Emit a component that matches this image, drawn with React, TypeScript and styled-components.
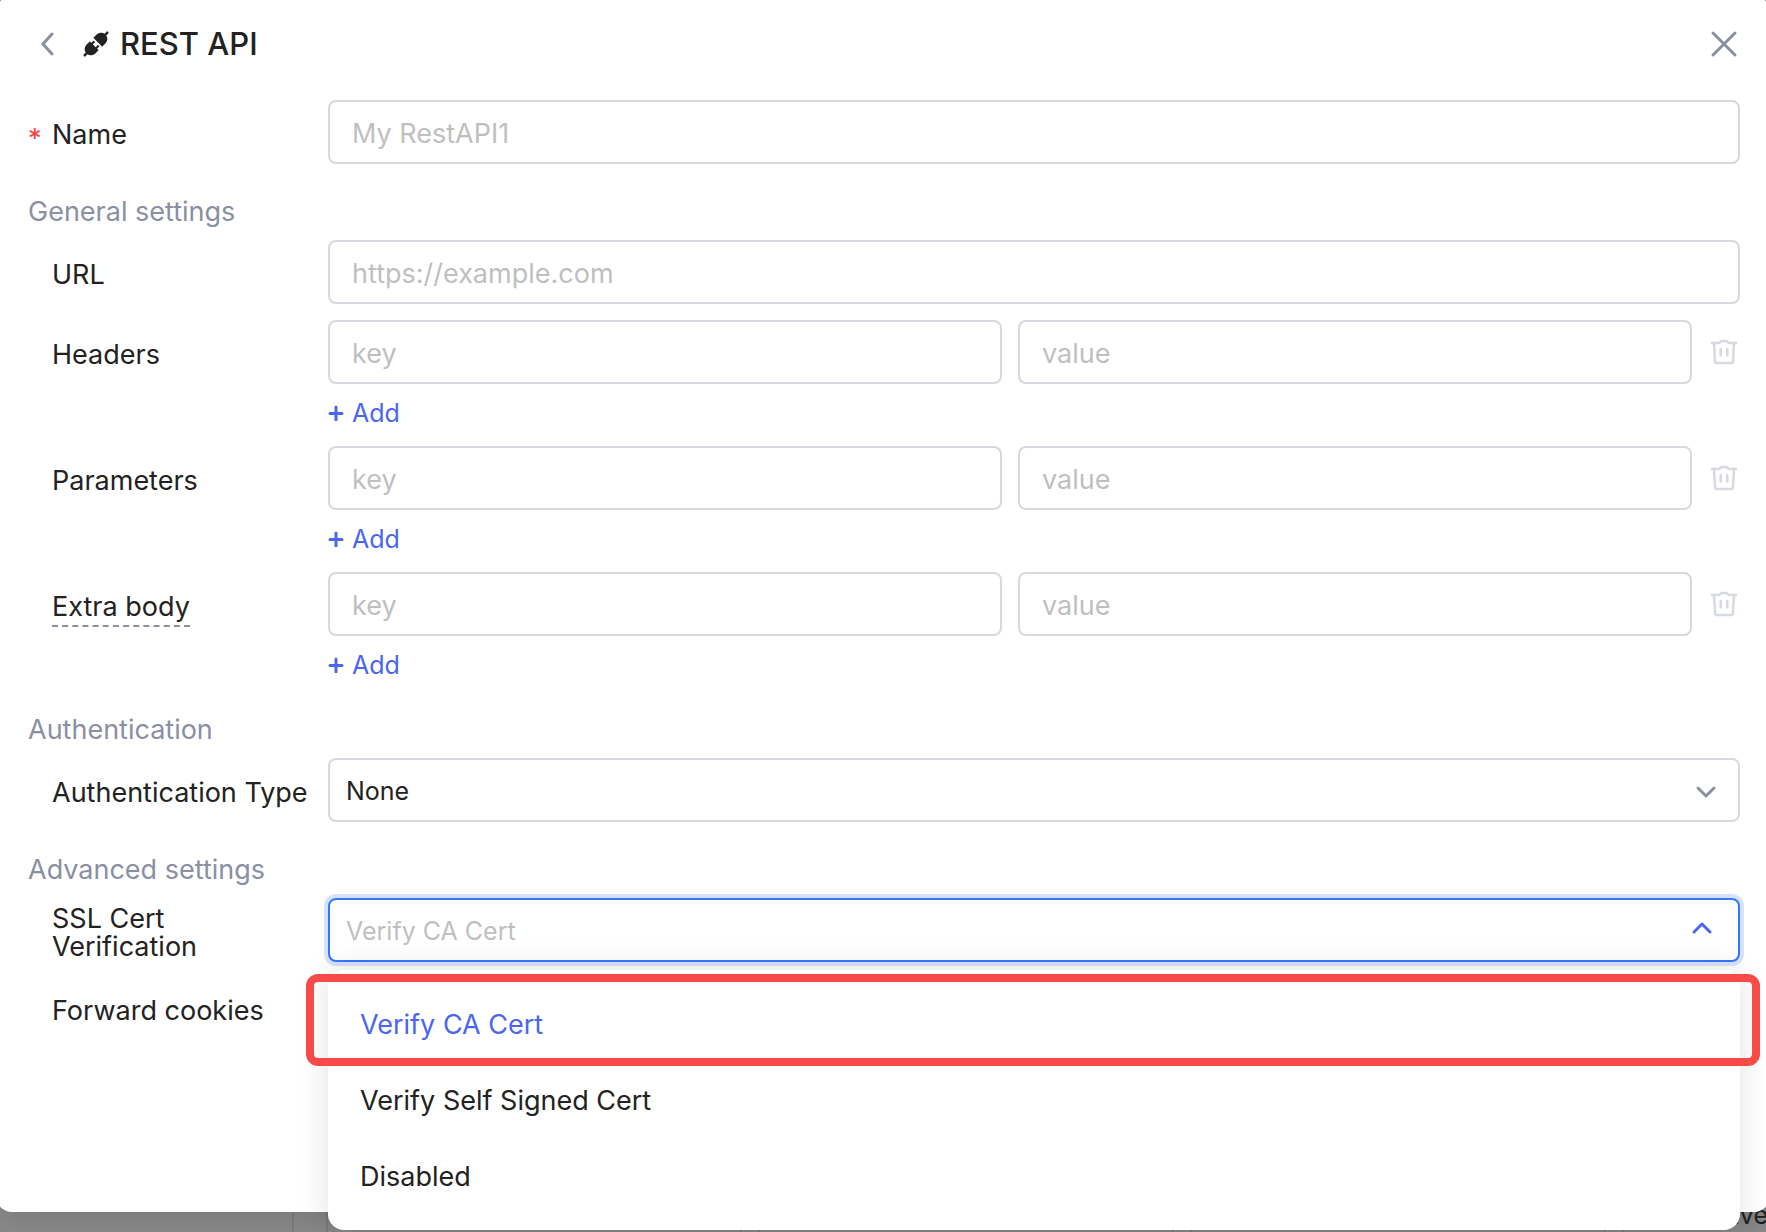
import React, { useState } from "react";
import { AiFillApi } from "react-icons/ai";
import styled, { createGlobalStyle, css } from "styled-components";

const colors = {
  text: "#222222",
  muted: "#8b8fa3",
  border: "#d7d9e0",
  placeholder: "#bfbfbf",
  link: "#4965f2",
  focus: "#3377ff",
  focusRing: "#d6e2ff",
  danger: "#ff4040",
  highlight: "#f74b47",
  backdrop: "#8a8a8a",
};

const GlobalStyle = createGlobalStyle`
  *, *::before, *::after { box-sizing: border-box; }
  body {
    margin: 0;
    color: ${colors.text};
    background: ${colors.backdrop};
    font-family: Inter, "Liberation Sans", sans-serif;
    font-size: 27px;
    line-height: 32px;
  }
  button, input, select { font: inherit; color: inherit; }
`;

const Screen = styled.div`
  position: relative;
  display: flex;
  flex-direction: column;
  min-height: 100vh;
  overflow: hidden;
`;

const Dialog = styled.main`
  position: relative;
  flex: 1;
  margin: -4px -4px 0;
  padding: 4px 30px 0 32px;
  border-radius: 16px;
  background: #fff;
  box-shadow: 0 8px 32px rgba(0, 0, 0, 0.12);
`;

const Backdrop = styled.div`
  display: grid;
  grid-template-columns: 294px 34px 414px 18px 414px 18px 414px 18px 1fr;
  height: 34px;
  margin-top: -14px;
`;

const BackdropCell = styled.div`
  display: flex;
  justify-content: flex-end;
  align-items: center;
  border-right: 2px solid #7c7d82;
  font-size: 25px;
  line-height: 34px;
  white-space: nowrap;

  &:last-child {
    margin-right: -2px;
    border-right: 0;
  }
`;

const Header = styled.header`
  display: flex;
  align-items: center;
  height: 88px;
  margin-bottom: 12px;
  padding: 0 0 0 4px;
`;

const Title = styled.h1`
  display: flex;
  flex: 1;
  align-items: center;
  gap: 8px;
  margin: 0 0 0 16px;
  font-size: 31px;
  font-weight: 500;
  line-height: 40px;
`;

const IconButton = styled.button`
  display: flex;
  align-items: center;
  justify-content: center;
  width: 32px;
  height: 32px;
  padding: 0;
  border: 0;
  background: none;
  color: ${colors.muted};
  cursor: pointer;

  &:disabled {
    color: ${colors.border};
    cursor: default;
  }
`;

const Section = styled.section`
  display: flex;
  flex-direction: column;
  gap: 16px;
  margin-bottom: 28px;
`;

const SectionTitle = styled.h2`
  margin: 0 0 -4px;
  padding-top: 4px;
  color: ${colors.muted};
  font-size: 27px;
  font-weight: 400;
  line-height: 32px;
`;

const Row = styled.div`
  display: grid;
  grid-template-columns: 260px minmax(0, 1fr);
  column-gap: 16px;
  padding-left: 24px;
`;

const Label = styled.label<{ $compact?: boolean }>`
  display: flex;
  align-items: center;
  height: ${({ $compact }) => ($compact ? 60 : 64)}px;
  padding-top: 6px;
  line-height: 28px;
`;

const Required = styled.span`
  width: 24px;
  margin-left: -24px;
  padding-top: 8px;
  color: ${colors.danger};
`;

const Hint = styled.span`
  padding: 6px 0 4px;
  border-bottom: 2px dashed ${colors.muted};
`;

const field = css`
  width: 100%;
  height: 64px;
  border: 2px solid ${colors.border};
  border-radius: 8px;
  outline: 0;
  background: #fff;
`;

const Input = styled.input`
  ${field}
  padding: 2px 22px 0;

  &::placeholder {
    color: ${colors.placeholder};
    opacity: 1;
  }
`;

const SelectBox = styled.div`
  position: relative;
`;

const Select = styled.select<{ $open?: boolean }>`
  ${field}
  appearance: none;
  padding: 2px 64px 0 16px;
  font-size: 25px;
  ${({ $open }) =>
    $open &&
    css`
      border-color: ${colors.focus};
      box-shadow: 0 0 0 4px ${colors.focusRing};
      color: ${colors.placeholder};
    `}
`;

const SelectArrow = styled.svg<{ $open?: boolean }>`
  position: absolute;
  top: ${({ $open }) => ($open ? 20 : 22)}px;
  right: ${({ $open }) => ($open ? 26 : 22)}px;
  color: ${({ $open }) => ($open ? colors.link : colors.muted)};
  pointer-events: none;
`;

const Pairs = styled.div`
  display: grid;
  grid-template-columns: minmax(0, 1fr) minmax(0, 1fr) 32px;
  align-items: center;
  gap: 12px 16px;
`;

const AddButton = styled.button`
  display: flex;
  align-items: center;
  justify-self: start;
  gap: 8px;
  height: 34px;
  padding: 0;
  border: 0;
  background: none;
  color: ${colors.link};
  font-size: 25px;
  line-height: 34px;
  cursor: pointer;
`;

const Menu = styled.div`
  position: absolute;
  z-index: 1;
  top: 72px;
  left: 0;
  right: 0;
  padding: 16px 0;
  border-radius: 16px;
  background: #fff;
  box-shadow: 0 0 32px rgba(0, 0, 0, 0.12);
`;

const MenuItem = styled.button<{ $selected?: boolean }>`
  display: block;
  width: 100%;
  height: 76px;
  padding: 2px 32px 0;
  border: 0;
  background: none;
  color: ${({ $selected }) => ($selected ? colors.link : colors.text)};
  text-align: left;
  cursor: pointer;
`;

const Highlight = styled.div`
  position: absolute;
  top: 4px;
  left: -22px;
  right: -20px;
  height: 92px;
  border: 8px solid ${colors.highlight};
  border-radius: 12px;
  pointer-events: none;
`;

const BackIcon = () => (
  <svg width="24" height="24" viewBox="0 0 24 24" fill="none" stroke="currentColor" strokeWidth="3" strokeLinecap="round" strokeLinejoin="round">
    <path d="M16 2 7 12l9 10" />
  </svg>
);

const CloseIcon = () => (
  <svg width="28" height="28" viewBox="0 0 28 28" fill="none" stroke="currentColor" strokeWidth="3" strokeLinecap="round">
    <path d="m3 3 22 22M25 3 3 25" />
  </svg>
);

const TrashIcon = () => (
  <svg width="28" height="28" viewBox="0 0 28 28" fill="none" stroke="currentColor" strokeWidth="2.5" strokeLinecap="round" strokeLinejoin="round">
    <path d="M2 5h7c1 0 1-2 3-2h4c2 0 2 2 3 2h7" />
    <path d="m4 5 1 18.500q0 1.500 1.500 1.500h15q1.500 0 1.500-1.500l1-18.500M10.700 11v6.500M17.300 11v6.500" />
  </svg>
);

const PlusIcon = () => (
  <svg width="16" height="16" viewBox="0 0 16 16" fill="none" stroke="currentColor" strokeWidth="3" strokeLinecap="round">
    <path d="M8 2v13M2 8.500h12" />
  </svg>
);

const Arrow = ({ open }: { open?: boolean }) => (
  <SelectArrow $open={open} width="24" height="24" viewBox="0 0 24 24" fill="none" stroke="currentColor" strokeWidth="3" strokeLinecap="round" strokeLinejoin="round">
    <path d={open ? "m4 14 8-8 8 8" : "m4 8 8 8 8-8"} />
  </SelectArrow>
);

function PairRow({ id, label, hint }: { id: string; label: string; hint?: boolean }) {
  return (
    <Row>
      <Label htmlFor={`${id}-key`}>{hint ? <Hint>{label}</Hint> : label}</Label>
      <Pairs>
        <Input id={`${id}-key`} placeholder="key" />
        <Input aria-label={`${label} value`} placeholder="value" />
        <IconButton type="button" aria-label={`Delete ${label}`} disabled>
          <TrashIcon />
        </IconButton>
        <AddButton type="button">
          <PlusIcon />
          Add
        </AddButton>
      </Pairs>
    </Row>
  );
}

const certOptions = ["Verify CA Cert", "Verify Self Signed Cert", "Disabled"];

export default function App() {
  const [cert, setCert] = useState(certOptions[0]);

  return (
    <>
      <GlobalStyle />
      <Screen>
        <Dialog>
          <Header>
            <IconButton type="button" aria-label="Back">
              <BackIcon />
            </IconButton>
            <Title>
              <AiFillApi size={32} />
              REST API
            </Title>
            <IconButton type="button" aria-label="Close">
              <CloseIcon />
            </IconButton>
          </Header>
          <form>
            <Section>
              <Row>
                <Label htmlFor="name">
                  <Required>*</Required>
                  Name
                </Label>
                <Input id="name" placeholder="My RestAPI1" />
              </Row>
            </Section>
            <Section>
              <SectionTitle>General settings</SectionTitle>
              <Row>
                <Label htmlFor="url">URL</Label>
                <Input id="url" placeholder="https://example.com" />
              </Row>
              <PairRow id="headers" label="Headers" />
              <PairRow id="parameters" label="Parameters" />
              <PairRow id="body" label="Extra body" hint />
            </Section>
            <Section>
              <SectionTitle>Authentication</SectionTitle>
              <Row>
                <Label htmlFor="auth">Authentication Type</Label>
                <SelectBox>
                  <Select id="auth">
                    <option>None</option>
                  </Select>
                  <Arrow />
                </SelectBox>
              </Row>
            </Section>
            <Section>
              <SectionTitle>Advanced settings</SectionTitle>
              <Row>
                <Label htmlFor="cert">
                  SSL Cert
                  <br />
                  Verification
                </Label>
                <SelectBox>
                  <Select id="cert" $open value={cert} onChange={(e) => setCert(e.target.value)}>
                    {certOptions.map((option) => (
                      <option key={option}>{option}</option>
                    ))}
                  </Select>
                  <Arrow open />
                  <Menu role="listbox" aria-label="SSL Cert Verification">
                    {certOptions.map((option) => (
                      <MenuItem
                        key={option}
                        type="button"
                        role="option"
                        aria-selected={option === cert}
                        $selected={option === cert}
                        onClick={() => setCert(option)}
                      >
                        {option}
                      </MenuItem>
                    ))}
                    <Highlight />
                  </Menu>
                </SelectBox>
              </Row>
              <Row>
                <Label as="span" $compact>
                  Forward cookies
                </Label>
              </Row>
            </Section>
          </form>
        </Dialog>
        <Backdrop>
          <BackdropCell />
          <BackdropCell />
          <BackdropCell />
          <BackdropCell />
          <BackdropCell />
          <BackdropCell />
          <BackdropCell />
          <BackdropCell />
          <BackdropCell>ive</BackdropCell>
        </Backdrop>
      </Screen>
    </>
  );
}
